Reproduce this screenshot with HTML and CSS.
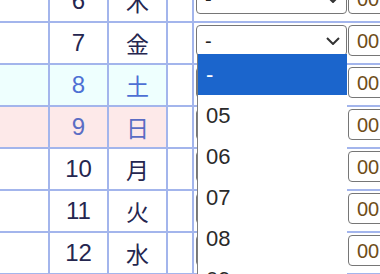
FILE: index.html
```html
<!DOCTYPE html>
<html lang="ja">
<head>
  <meta charset="UTF-8" />
  <meta name="viewport" content="width=device-width, initial-scale=1.0" />
  <title>勤務表</title>
  <link rel="stylesheet" href="styles.css">
</head>
<body>
  <div class="sheet">
    <table class="days">
      <tr>
        <td class="pad"></td><td class="num">6</td><td class="dow">木</td><td class="mark"></td>
        <td class="time"><span class="hour-box"><select class="pick-hour"><option>-</option></select><svg class="chev" width="14" height="8" viewBox="0 0 14 8"><path d="M1 1l6 6 6-6" /></svg></span><select class="pick-min"><option>00</option></select></td>
      </tr>
      <tr>
        <td class="pad"></td><td class="num">7</td><td class="dow">金</td><td class="mark"></td>
        <td class="time"><span class="hour-box"><select class="pick-hour"><option>-</option></select><svg class="chev" width="14" height="8" viewBox="0 0 14 8"><path d="M1 1l6 6 6-6" /></svg></span><select class="pick-min"><option>00</option></select></td>
      </tr>
      <tr class="sat">
        <td class="pad"></td><td class="num">8</td><td class="dow">土</td><td class="mark"></td>
        <td class="time"><span class="hour-box"><select class="pick-hour"><option>-</option></select><svg class="chev" width="14" height="8" viewBox="0 0 14 8"><path d="M1 1l6 6 6-6" /></svg></span><select class="pick-min"><option>00</option></select></td>
      </tr>
      <tr class="sun">
        <td class="pad"></td><td class="num">9</td><td class="dow">日</td><td class="mark"></td>
        <td class="time"><span class="hour-box"><select class="pick-hour"><option>-</option></select><svg class="chev" width="14" height="8" viewBox="0 0 14 8"><path d="M1 1l6 6 6-6" /></svg></span><select class="pick-min"><option>00</option></select></td>
      </tr>
      <tr>
        <td class="pad"></td><td class="num">10</td><td class="dow">月</td><td class="mark"></td>
        <td class="time"><span class="hour-box"><select class="pick-hour"><option>-</option></select><svg class="chev" width="14" height="8" viewBox="0 0 14 8"><path d="M1 1l6 6 6-6" /></svg></span><select class="pick-min"><option>00</option></select></td>
      </tr>
      <tr>
        <td class="pad"></td><td class="num">11</td><td class="dow">火</td><td class="mark"></td>
        <td class="time"><span class="hour-box"><select class="pick-hour"><option>-</option></select><svg class="chev" width="14" height="8" viewBox="0 0 14 8"><path d="M1 1l6 6 6-6" /></svg></span><select class="pick-min"><option>00</option></select></td>
      </tr>
      <tr>
        <td class="pad"></td><td class="num">12</td><td class="dow">水</td><td class="mark"></td>
        <td class="time"><span class="hour-box"><select class="pick-hour"><option>-</option></select><svg class="chev" width="14" height="8" viewBox="0 0 14 8"><path d="M1 1l6 6 6-6" /></svg></span><select class="pick-min"><option>00</option></select></td>
      </tr>
      <tr>
        <td class="pad"></td><td class="num">13</td><td class="dow">木</td><td class="mark"></td>
        <td class="time"><span class="hour-box"><select class="pick-hour"><option>-</option></select><svg class="chev" width="14" height="8" viewBox="0 0 14 8"><path d="M1 1l6 6 6-6" /></svg></span><select class="pick-min"><option>00</option></select></td>
      </tr>
    </table>

    <!-- open list of the 7th's hour select -->
    <div class="dropdown">
      <div class="opt selected">-</div>
      <div class="opt">05</div>
      <div class="opt">06</div>
      <div class="opt">07</div>
      <div class="opt">08</div>
      <div class="opt">09</div>
    </div>
  </div>
</body>
</html>
```

FILE: styles.css
```css
body {
  margin: 0;
  padding: 0;
  font-family: 'Liberation Sans', Arial, 'Noto Sans CJK JP', sans-serif;
  background-color: #fff;
  overflow: hidden;
}
.sheet {
  position: relative;
  width: 380px;
  height: 274px;
  overflow: hidden;
}
.days {
  border-collapse: separate;
  border-spacing: 0;
  table-layout: fixed;
  margin-left: -52px;
  margin-top: -19px;
  width: 460px;
  color: #25264f;
  font-size: 24px;
}
.days td {
  height: 38px;
  padding: 0;
  border-bottom: 2px solid #a3b5ec;
  border-right: 2px solid #a3b5ec;
  text-align: center;
  vertical-align: middle;
}
.days .pad { width: 100px; }
.days .num { width: 57px; }
.days .dow { width: 57px; font-family: 'Noto Sans CJK JP', sans-serif; font-size: 23px; }
.days .mark { width: 24px; }
.days .time {
  width: 212px;
  border-right: none;
  text-align: left;
  vertical-align: top;
  padding: 2px 0 0 2px;
  white-space: nowrap;
  font-size: 0;
}

.sat .pad, .sat .num, .sat .dow { background-color: #eefffe; color: #4d70d4; }
.sun .pad, .sun .num, .sun .dow { background-color: #fde9e9; color: #5a6dc4; }

select {
  -webkit-appearance: none;
  appearance: none;
  box-sizing: border-box;
  font-family: 'Liberation Sans', Arial, sans-serif;
  font-size: 20px;
  height: 31px;
  margin: 0;
  background-color: #fff;
  border: 1px solid #767676;
  border-radius: 4px;
  color: #222;
  vertical-align: top;
}
.hour-box {
  position: relative;
  display: inline-block;
  vertical-align: top;
  margin-right: 1px;
}
.pick-hour { width: 151px; padding: 0 0 0 8px; }
.chev {
  position: absolute;
  right: 7px;
  top: 12px;
  fill: none;
  stroke: #333;
  stroke-width: 2;
  pointer-events: none;
}
.pick-min { width: 80px; padding: 0 0 0 8px; color: #6f4d18; }

.dropdown {
  position: absolute;
  left: 197px;
  top: 54px;
  width: 150px;
  box-sizing: border-box;
  background-color: #fff;
  border-left: 1px solid #7d7d7d;
}
.opt {
  height: 41px;
  line-height: 41px;
  padding-left: 8px;
  font-size: 22px;
  color: #2a2a2a;
}
.opt.selected { background-color: #1b65cc; color: #fff; }
```
